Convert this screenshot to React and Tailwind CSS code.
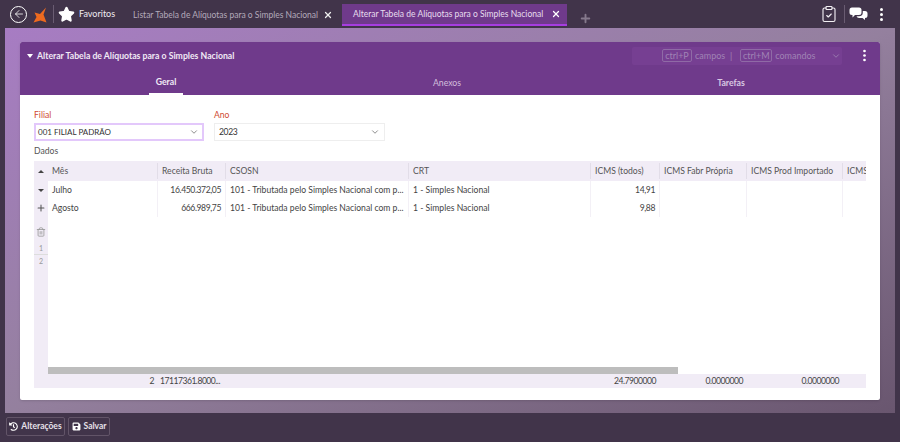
import React from "react";
import { ArrowLeft, Star, ClipboardCheck, ChevronDown, Trash2, Plus, X } from "lucide-react";
import { FaHistory, FaSave } from "react-icons/fa";

const columns = [
  { id: "mes", text: "Mês", width: "w-[110px]" },
  { id: "receita", text: "Receita Bruta", width: "w-[68px]" },
  { id: "csosn", text: "CSOSN", width: "w-[183px]" },
  { id: "crt", text: "CRT", width: "w-[182px]" },
  { id: "todos", text: "ICMS (todos)", width: "w-[69px]" },
  { id: "fabr", text: "ICMS Fabr Própria", width: "w-[87px]" },
  { id: "prod", text: "ICMS Prod Importado", width: "w-[96px]" },
  { id: "icms", text: "ICMS", width: "w-[23px]" },
];

const rows = [
  { mes: "Julho", receita: "16.450.372,05", csosn: "101 - Tributada pelo Simples Nacional com p...", crt: "1 - Simples Nacional", todos: "14,91" },
  { mes: "Agosto", receita: "666.989,75", csosn: "101 - Tributada pelo Simples Nacional com p...", crt: "1 - Simples Nacional", todos: "9,88" },
];

const Dots = ({ className }) => (
  <div className={"flex flex-col gap-[2px] " + className}>
    <span className="h-[3px] w-[3px] rounded-full bg-white" />
    <span className="h-[3px] w-[3px] rounded-full bg-white" />
    <span className="h-[3px] w-[3px] rounded-full bg-white" />
  </div>
);

const Logo = () => (
  <svg width="14" height="16" viewBox="0 0 14 16" className="ml-[6px] mt-[2px]">
    <path d="M13 0.5 L10.5 7.5 L13.5 15.5 L7.5 13.5 L0.5 15.5 L3.5 10 L1.5 5.5 L7 7 Z" fill="#ee6a1f" />
  </svg>
);

const Chat = () => (
  <svg width="19" height="14" viewBox="0 0 19 14">
    <path d="M3 0.5 H10 Q12.5 0.5 12.5 3 V5.5 Q12.5 8 10 8 H6 L3.5 10.5 V8 H3 Q0.5 8 0.5 5.5 V3 Q0.5 0.5 3 0.5 Z" fill="#fff" />
    <path d="M13.8 4 H16 Q18.5 4 18.5 6.5 V8.5 Q18.5 11 16 11 V13 L13.5 11 H10 Q8 11 7.5 9.3 H10 Q13.8 9.3 13.8 5.5 Z" fill="#fff" />
  </svg>
);

const App = () => {
  return (
    <div
      className="flex h-[442px] w-[900px] flex-col overflow-hidden bg-[#41344a] text-[8.6px] text-[#444]"
      style={{ fontFamily: 'Lato, "Open Sans", sans-serif' }}
    >
      <div className="flex h-[28px] shrink-0 items-center text-[8.5px]">
        <div className="ml-[10px] flex h-[17px] w-[17px] items-center justify-center rounded-full border-[1.5px] border-white text-white">
          <ArrowLeft size={12} strokeWidth={1.6} />
        </div>
        <Logo />
        <div className="ml-[6px] h-[18px] w-px bg-[#6a5c72]" />
        <Star size={17} className="ml-[4px] fill-white text-white" />
        <span className="ml-[4px] w-[34px] whitespace-nowrap text-[9px] text-[#f0ecf2]">Favoritos</span>
        <div className="ml-[20px] mt-[4px] flex h-[22px] w-[200px] items-center justify-between self-start text-[#b4aaba]">
          <span className="whitespace-nowrap">Listar Tabela de Alíquotas para o Simples Nacional</span>
          <X size={10} strokeWidth={3} className="shrink-0 text-[#eee]" />
        </div>
        <div className="ml-[9px] mt-[4px] flex h-[22px] w-[225px] shrink-0 items-center justify-between self-start border-b-2 border-[#a63de0] bg-[#6f3a8b] pl-[11px] pr-[6px] text-[#e8deee]">
          <span className="whitespace-nowrap">Alterar Tabela de Alíquotas para o Simples Nacional</span>
          <X size={10} strokeWidth={3} className="shrink-0 text-white" />
        </div>
        <Plus size={13} strokeWidth={3.5} className="ml-[12px] mt-[9px] text-[#85798c]" />
        <ClipboardCheck size={18} strokeWidth={1.5} className="ml-auto text-[#f3f0f4]" />
        <div className="ml-[6px] h-[18px] w-px bg-[#6a5c72]" />
        <div className="ml-[4px]">
          <Chat />
        </div>
        <Dots className="ml-[12px] mr-[17px]" />
      </div>

      <div className="mx-[5px] flex min-h-0 flex-1 bg-gradient-to-br from-[#a77cc3] via-[#94809e] to-[#69566f] pb-[13px] pl-[15px] pr-[15px] pt-[14px]">
        <div className="flex w-full flex-col overflow-hidden rounded-[2px] bg-white shadow-sm">
          <div className="h-[53px] shrink-0 bg-[#6f3a8b]">
            <div className="flex h-[27px] items-center pl-[7px] pr-[14px]">
              <span className="h-0 w-0 border-x-[3px] border-t-[4px] border-x-transparent border-t-white" />
              <span className="ml-[4px] text-[8.7px] font-bold text-[#f1e9f5]">
                Alterar Tabela de Alíquotas para o Simples Nacional
              </span>
              <div className="ml-auto flex h-[18px] w-[210px] items-center rounded-[2px] bg-[#763f92] pl-[30px] text-[9px] text-[#a083b5]">
                <span className="flex h-[13px] w-[30px] items-center justify-center rounded-[2px] border border-[#8f6aa6]">ctrl+P</span>
                <span className="ml-[3px] w-[28px]">campos</span>
                <span className="ml-[7px]">|</span>
                <span className="ml-[8px] flex h-[13px] w-[32px] items-center justify-center rounded-[2px] border border-[#8f6aa6]">ctrl+M</span>
                <span className="ml-[3px] w-[40px] whitespace-nowrap">comandos</span>
                <ChevronDown size={10} className="ml-[16px]" />
              </div>
              <Dots className="ml-[21px] scale-90" />
            </div>
            <div className="flex h-[26px] text-[8.7px]">
              <div className="ml-[129px] flex h-full w-[34px] items-center justify-center border-b-2 border-white pt-[2px] font-bold text-[#f1e9f5]">
                Geral
              </div>
              <div className="ml-[244px] flex h-full w-[40px] items-center justify-center pt-[2px] text-[#d3bfdd]">Anexos</div>
              <div className="ml-[244px] flex h-full w-[40px] items-center justify-center pt-[2px] font-bold text-[#d9c8e2]">
                Tarefas
              </div>
            </div>
          </div>

          <div className="flex min-h-0 flex-1 flex-col pl-[14px] pr-[14px]">
            <div className="mt-[14px] flex gap-[10px]">
              <div className="flex flex-col">
                <label className="h-[14px] text-[#cf4a32]">Filial</label>
                <div className="flex h-[18px] w-[170px] items-center justify-between border-2 border-[#e3c8fb] pl-[2px] pr-[3px] text-[8px] text-[#333]">
                  <span>001 FILIAL PADRÃO</span>
                  <ChevronDown size={10} className="text-[#777]" />
                </div>
              </div>
              <div className="flex flex-col">
                <label className="h-[14px] text-[#cf4a32]">Ano</label>
                <div className="flex h-[18px] w-[171px] items-center justify-between border border-[#eeeeee] pl-[4px] pr-[4px] text-[#333]">
                  <span className="tracking-[-0.4px]">2023</span>
                  <ChevronDown size={10} className="text-[#777]" />
                </div>
              </div>
            </div>
            <div className="mt-[4px] h-[16px] leading-[13px] text-[#555]">Dados</div>

            <div className="flex h-[227px] flex-col">
              <div className="flex h-[20px] shrink-0 items-center bg-[#f1ecf6]">
                <div className="flex w-[14px] justify-center">
                  <span className="h-0 w-0 border-x-[3px] border-b-[3px] border-x-transparent border-b-[#444]" />
                </div>
                {columns.map((col, i) => (
                  <div
                    key={col.id}
                    className={
                      col.width +
                      " flex h-[16px] shrink-0 items-center overflow-hidden whitespace-nowrap pl-[4px] text-[#555] " +
                      (i < columns.length - 1 ? "border-r border-[#e2dde8]" : "")
                    }
                  >
                    {col.text}
                  </div>
                ))}
              </div>

              <div className="flex min-h-0 flex-1">
                <div className="flex w-[14px] shrink-0 flex-col items-center bg-[#f1ecf6] text-[#555]">
                  <div className="flex h-[18px] w-full items-center justify-center">
                    <span className="h-0 w-0 border-x-[3px] border-t-[3px] border-x-transparent border-t-[#444]" />
                  </div>
                  <Plus size={10} strokeWidth={2.5} className="mt-[4px]" />
                  <Trash2 size={10} className="mt-[14px] text-[#999]" />
                  <div className="mt-[5px] flex h-[13px] w-full items-center justify-center border-b border-[#ddd] text-[7px] text-[#999]">1</div>
                  <div className="flex h-[13px] w-full items-center justify-center text-[7px] text-[#999]">2</div>
                </div>
                <div className="flex min-w-0 flex-1 flex-col">
                  <div className="min-h-0 flex-1">
                    {rows.map((row) => (
                      <div key={row.mes} className="flex h-[18px]">
                        {columns.map((col, i) => (
                          <div
                            key={col.id}
                            className={
                              col.width +
                              " flex shrink-0 items-center overflow-hidden whitespace-nowrap px-[4px] text-[#444] " +
                              (col.id === "receita" || col.id === "todos" ? "justify-end tracking-[-0.4px] " : "") +
                              (i < columns.length - 1 ? "border-r border-[#f3f0f6]" : "")
                            }
                          >
                            {row[col.id]}
                          </div>
                        ))}
                      </div>
                    ))}
                  </div>
                  <div className="h-[7px] w-[630px] shrink-0 bg-[#bdbdbd]" />
                </div>
              </div>

              <div className="flex h-[14px] shrink-0 items-center bg-[#f1ecf6] text-[#444] tracking-[-0.5px]">
                <div className="w-[121px] pr-[1px] text-right">2</div>
                <div className="ml-[5px] w-[62px] whitespace-nowrap">17117361.8000...</div>
                <div className="w-[434px] text-right">24.7900000</div>
                <div className="w-[87px] text-right">0.0000000</div>
                <div className="w-[96px] text-right">0.0000000</div>
              </div>
            </div>
          </div>
        </div>
      </div>

      <div className="flex h-[29px] shrink-0 items-start gap-[3px] pl-[6px] pt-[4px] text-[8.5px] font-bold text-[#e6e1e9]">
        <button className="flex h-[19px] w-[59px] items-center justify-center gap-[3px] rounded-[2px] border border-[#625468]">
          <FaHistory size={9} className="text-white" />
          Alterações
        </button>
        <button className="flex h-[19px] w-[42px] items-center justify-center gap-[3px] rounded-[2px] border border-[#625468]">
          <FaSave size={9} className="text-white" />
          Salvar
        </button>
      </div>
    </div>
  );
};

export default App;
